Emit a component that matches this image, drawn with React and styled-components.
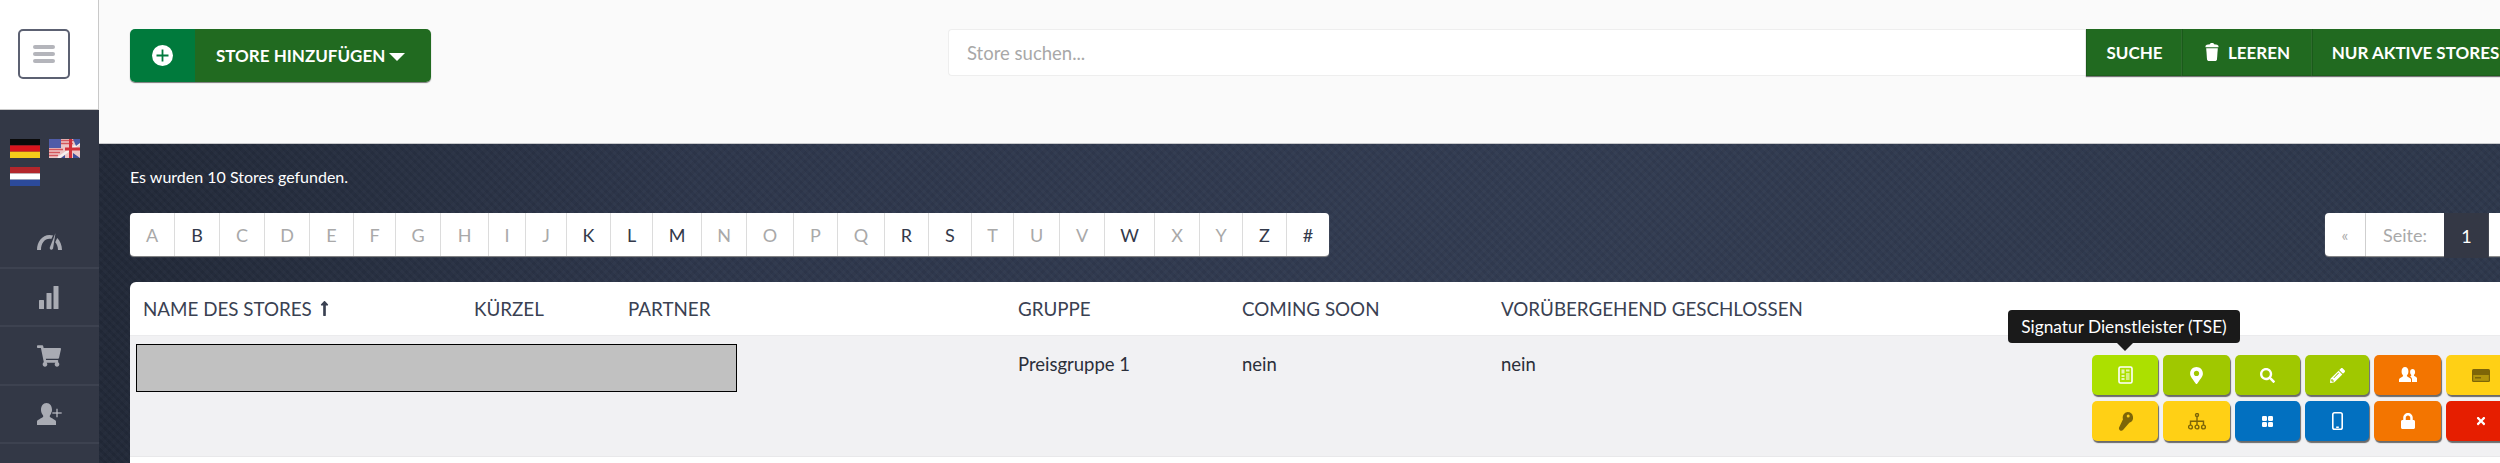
import React from "react";
import styled, { createGlobalStyle } from "styled-components";
import {
  FaShoppingCart,
  FaMapMarkerAlt,
  FaSearch,
  FaPencilAlt,
  FaLock,
  FaTimes,
  FaLongArrowAltUp,
} from "react-icons/fa";

const GlobalStyle = createGlobalStyle`
  html, body {
    margin: 0;
    padding: 0;
    background: #fafafa;
    font-family: "Lato", "Open Sans", sans-serif;
    overflow: hidden;
  }
`;

const LETTERS = [
  ["A", 45, 0], ["B", 45, 1], ["C", 45, 0], ["D", 45, 0], ["E", 44, 0], ["F", 42, 0],
  ["G", 45, 0], ["H", 48, 0], ["I", 37, 0], ["J", 41, 0], ["K", 44, 1], ["L", 42, 1],
  ["M", 49, 1], ["N", 45, 0], ["O", 47, 0], ["P", 44, 0], ["Q", 47, 0], ["R", 44, 1],
  ["S", 43, 1], ["T", 42, 0], ["U", 46, 0], ["V", 45, 0], ["W", 50, 1], ["X", 45, 0],
  ["Y", 43, 0], ["Z", 44, 1], ["#", 42, 1],
];

const COLUMNS = [
  ["NAME DES STORES", 331],
  ["KÜRZEL", 154],
  ["PARTNER", 390],
  ["GRUPPE", 224],
  ["COMING SOON", 259],
  ["VORÜBERGEHEND GESCHLOSSEN", 500],
];

const LIME = "#a0c800";
const ORANGE = "#f37500";
const YELLOW = "#ffd015";
const BLUE = "#0270c0";
const RED = "#e61e00";
const SIDE_ICON = "#a9abb3";
const DARK_ICON = "#7d6508";

function PlusCircle() {
  return (
    <svg width="21" height="21" viewBox="0 0 21 21">
      <circle cx="10.5" cy="10.5" r="10.5" fill="#fff" />
      <path d="M10.5 4.5v12M4.5 10.5h12" stroke="#007a3c" strokeWidth="1.8" />
    </svg>
  );
}

function TrashIcon() {
  return (
    <svg width="14" height="18" viewBox="0 0 14 18" fill="#fff">
      <path d="M5 1.2C5 .5 5.6 0 7 0s2 .5 2 1.2c2.5.2 4.5.8 4.5 1.8v1.2H.5V3c0-1 2-1.6 4.5-1.8z" />
      <path d="M1.2 5.200h11.600l-.8 11c-.1 1-.9 1.800-2 1.800H4c-1.100 0-1.900-.8-2-1.800z" />
    </svg>
  );
}

function TseIcon() {
  return (
    <svg width="15" height="18" viewBox="0 0 15 18">
      <rect x="1" y="1" width="13" height="16" rx="1.5" fill="none" stroke="#fff" strokeWidth="1.6" />
      <rect x="3.5" y="3.5" width="3" height="4" fill="#fff" opacity="0.7" />
      <rect x="8" y="3.5" width="3.5" height="2" fill="#fff" opacity="0.7" />
      <rect x="3.5" y="9" width="3" height="2" fill="#fff" opacity="0.7" />
      <rect x="8" y="7" width="3.5" height="7" fill="#fff" opacity="0.5" />
      <rect x="3.5" y="12" width="3" height="2" fill="#fff" opacity="0.7" />
    </svg>
  );
}

function TreeIcon() {
  return (
    <svg width="18" height="17" viewBox="0 0 18 17" fill="none" stroke={DARK_ICON} strokeWidth="1.4">
      <circle cx="9" cy="2" r="1.5" />
      <path d="M9 3.5V12M2.5 12V8.2h13V12" />
      <circle cx="2.5" cy="14" r="1.9" />
      <circle cx="9" cy="14" r="1.9" />
      <circle cx="15.5" cy="14" r="1.9" />
    </svg>
  );
}

function KeyIcon() {
  return (
    <svg width="15" height="19" viewBox="0 0 15 19" fill={DARK_ICON}>
      <path d="M9.5 0a5.500 5.500 0 0 1 1.800 10.700L5 18c-.7.8-1.900 1-2.900.4C1 17.700.6 16.400 1.200 15.300L5 7.200A5.500 5.500 0 0 1 9.500 0z" />
      <circle cx="10.2" cy="4" r="1.5" fill={YELLOW} />
    </svg>
  );
}

function GridIcon() {
  return (
    <svg width="11" height="11" viewBox="0 0 11 11" fill="#fff">
      <rect width="5" height="5" rx="1.2" />
      <rect x="6" width="5" height="5" rx="1.2" />
      <rect y="6" width="5" height="5" rx="1.2" />
      <rect x="6" y="6" width="5" height="5" rx="1.2" />
    </svg>
  );
}

function PhoneIcon() {
  return (
    <svg width="11" height="18" viewBox="0 0 11 18">
      <rect x="0.8" y="0.8" width="9.4" height="16.4" rx="1.8" fill="none" stroke="#fff" strokeWidth="1.6" />
      <rect x="4.2" y="14.5" width="2.6" height="1.5" fill="#fff" />
    </svg>
  );
}

function CardIcon() {
  return (
    <svg width="18" height="13" viewBox="0 0 18 13">
      <rect width="18" height="13" rx="1.5" fill={DARK_ICON} />
      <rect x="1.2" y="6" width="15.6" height="5.8" fill="#b2940c" />
      <rect x="3" y="8" width="6" height="1.5" fill={DARK_ICON} />
    </svg>
  );
}

function UsersIcon() {
  return (
    <svg width="18" height="16" viewBox="0 0 18 16" fill="#fff">
      <path d="M0 15v-2.500c0-1.400 3-2.200 4-3.200.3-.4 0-1-.4-1.500C2.800 6.700 2.600 5.500 2.600 4.200 2.600 1.800 3.900 0 6 0s3.400 1.800 3.400 4.200c0 1.300-.2 2.500-1 3.600-.4.500-.7 1.100-.4 1.500 1 1 4 1.800 4 3.200V15z" />
      <path d="M13 15v-2.800c0-1-.8-1.800-2-2.600.3-.3.8-.5 1.200-.9.200-.3 0-.7-.3-1.100-.6-.8-.8-1.700-.8-2.700 0-1.800 1-3 2.500-3S16.100 3.100 16.100 4.900c0 1-.2 1.900-.8 2.700-.3.400-.5.800-.3 1.100.7.700 3 1.300 3 2.400V15z" />
    </svg>
  );
}

function GaugeIcon() {
  return (
    <svg width="25" height="17" viewBox="0 0 25 17" fill={SIDE_ICON}>
      <path d="M0 17C0 9 5 2 12.500 2c1.300 0 2.500.2 3.600.6l-1.800 3.400c-.6-.1-1.200-.2-1.800-.2C7.500 5.800 4 10.500 4 17z" />
      <path d="M18.500 0 12.800 14.500c-.3 1.100.4 2 1.300 2.200 1 .2 1.800-.4 2-1.400z" />
      <path d="M20.200 5C23 7.800 25 12 25 17h-4c0-3.200-1-5.800-2.800-7.800z" />
    </svg>
  );
}

function BarsIcon() {
  return (
    <svg width="20" height="23" viewBox="0 0 20 23" fill={SIDE_ICON}>
      <rect x="0" y="14" width="5" height="9" rx="0.5" />
      <rect x="7.5" y="7" width="5" height="16" rx="0.5" />
      <rect x="14.5" y="0" width="5" height="23" rx="0.5" />
    </svg>
  );
}

function UserPlusIcon() {
  return (
    <svg width="25" height="22" viewBox="0 0 25 22" fill={SIDE_ICON}>
      <path d="M0 22v-3.500c0-1.800 4.500-3 6-4.500.5-.6.2-1.400-.4-2.200C4.400 10.200 4 8.500 4 6.800 4 3 6 0 9.500 0S15 3 15 6.800c0 1.700-.4 3.400-1.600 5-.6.8-.9 1.600-.4 2.200 1.500 1.500 6 2.700 6 4.500V22z" />
      <path d="M19 5.500h2V9h4v2h-4v3.500h-2V11h-4V9h4z" stroke="#333846" strokeWidth="0.6" />
    </svg>
  );
}

function FlagDe() {
  return (
    <svg width="30" height="19" viewBox="0 0 30 19">
      <rect width="30" height="6.4" fill="#0a0a0a" />
      <rect y="6.4" width="30" height="6.3" fill="#d8141c" />
      <rect y="12.7" width="30" height="6.3" fill="#f6cc1a" />
    </svg>
  );
}

function FlagNl() {
  return (
    <svg width="30" height="19" viewBox="0 0 30 19">
      <rect width="30" height="6.4" fill="#b3262c" />
      <rect y="6.4" width="30" height="6.3" fill="#fff" />
      <rect y="12.7" width="30" height="6.3" fill="#2c4a9a" />
    </svg>
  );
}

function FlagUk() {
  return (
    <svg width="31" height="19" viewBox="0 0 31 19">
      <rect width="31" height="19" fill="#ecc6c6" />
      <path d="M12 1.5h19M12 4.5h12M0 10.5h14M0 13.5h11M0 16.5h9" stroke="#d4575c" strokeWidth="1.3" />
      <rect width="12" height="9" fill="#505ca8" />
      <path d="M9 19 31 4" stroke="#f4f0f0" strokeWidth="2.5" />
      <path d="M24 0 31 0 31 4 27 7z" fill="#4a5aa4" />
      <path d="M20 0h3v8.500h8v3h-8V19h-3v-7.500h-4V8.500h4z" fill="#d2303a" />
      <path d="M24 19h7l-7-5zM12 19l4-3v3z" fill="#3f4f9a" />
    </svg>
  );
}

function App() {
  return (
    <Page>
      <GlobalStyle />
      <Sidebar>
        <LogoBar>
          <MenuToggle>
            <span />
            <span />
            <span />
          </MenuToggle>
        </LogoBar>
        <Flags>
          <FlagDe />
          <FlagUk />
          <FlagNl />
        </Flags>
        <MenuItem $h={51}><GaugeIcon /></MenuItem>
        <MenuItem $h={56}><BarsIcon /></MenuItem>
        <MenuItem $h={57}><FaShoppingCart size={24} color={SIDE_ICON} /></MenuItem>
        <MenuItem $h={56}><UserPlusIcon /></MenuItem>
        <MenuPeak />
      </Sidebar>
      <Main>
        <TopBar>
          <AddButton>
            <AddIcon><PlusCircle /></AddIcon>
            <AddLabel>STORE HINZUFÜGEN<Caret /></AddLabel>
          </AddButton>
          <SearchGroup>
            <SearchInput placeholder="Store suchen..." />
            <SearchButton $w={96}>SUCHE</SearchButton>
            <SearchButton $w={130}><TrashIcon />LEEREN</SearchButton>
            <SearchButton $w={206}>NUR AKTIVE STORES</SearchButton>
          </SearchGroup>
        </TopBar>
        <Content>
          <Found>Es wurden 10 Stores gefunden.</Found>
          <FilterRow>
            <AlphaBar>
              {LETTERS.map(([letter, width, active]) => (
                <Letter key={letter} $w={width} $active={active}>{letter}</Letter>
              ))}
            </AlphaBar>
            <Pager>
              <PagerCell $w={41}><small>«</small></PagerCell>
              <PagerCell $w={78} $plain>Seite:</PagerCell>
              <PagerCurrent>1</PagerCurrent>
              <PagerCell $w={20} $plain />
            </Pager>
          </FilterRow>
          <Card>
            <HeadRow>
              {COLUMNS.map(([label, width], i) => (
                <HeadCell key={label} $w={width}>
                  {label}
                  {i === 0 && <FaLongArrowAltUp size={17} />}
                </HeadCell>
              ))}
            </HeadRow>
            <BodyRow>
              <Redacted />
              <BodyCell $w={224}>Preisgruppe 1</BodyCell>
              <BodyCell $w={259}>nein</BodyCell>
              <BodyCell $w={591}>nein</BodyCell>
              <Actions>
                <Tooltip>Signatur Dienstleister (TSE)</Tooltip>
                <ActionRow>
                  <Action $w={66} $bg="#ace000"><TseIcon /></Action>
                  <Action $w={67} $bg={LIME}><FaMapMarkerAlt size={17} /></Action>
                  <Action $w={65} $bg={LIME}><FaSearch size={15} /></Action>
                  <Action $w={64} $bg={LIME}><FaPencilAlt size={15} /></Action>
                  <Action $w={67} $bg={ORANGE}><UsersIcon /></Action>
                  <Action $w={70} $bg={YELLOW}><CardIcon /></Action>
                </ActionRow>
                <ActionRow>
                  <Action $w={66} $bg={YELLOW}><KeyIcon /></Action>
                  <Action $w={67} $bg={YELLOW}><TreeIcon /></Action>
                  <Action $w={65} $bg={BLUE}><GridIcon /></Action>
                  <Action $w={64} $bg={BLUE}><PhoneIcon /></Action>
                  <Action $w={67} $bg={ORANGE}><FaLock size={16} /></Action>
                  <Action $w={70} $bg={RED}><FaTimes size={12} /></Action>
                </ActionRow>
              </Actions>
            </BodyRow>
          </Card>
        </Content>
      </Main>
    </Page>
  );
}

export default App;

const Page = styled.div`
  display: flex;
  width: 2500px;
  height: 463px;
  overflow: hidden;
`;

const Sidebar = styled.aside`
  width: 99px;
  flex: none;
  background: #333846;
`;

const LogoBar = styled.div`
  height: 110px;
  box-sizing: border-box;
  padding: 29px 0 0 18px;
  background: #fff;
  border-right: 1px solid #c9c9c9;
  border-bottom: 1px solid #c9c9c9;
`;

const MenuToggle = styled.div`
  width: 52px;
  height: 50px;
  box-sizing: border-box;
  display: flex;
  flex-direction: column;
  justify-content: center;
  align-items: center;
  gap: 3px;
  border: 2px solid #5c6172;
  border-radius: 5px;

  span {
    width: 22px;
    height: 4px;
    border-radius: 2px;
    background: #b4b5bb;
  }
`;

const Flags = styled.div`
  height: 106px;
  box-sizing: border-box;
  padding: 29px 0 0 10px;
  display: flex;
  flex-wrap: wrap;
  align-content: flex-start;
  column-gap: 9px;
  row-gap: 9px;
  width: 90px;

  svg {
    display: block;
  }
`;

const MenuItem = styled.div`
  height: ${(props) => props.$h}px;
  display: flex;
  align-items: center;
  justify-content: center;
  border-bottom: 2px solid #3d4250;
  padding-right: 1px;
`;

const MenuPeak = styled.div`
  width: 0;
  height: 0;
  margin: 21px 0 0 40px;
  border-left: 5px solid transparent;
  border-right: 5px solid transparent;
  border-bottom: 9px solid #a9abb3;
`;

const Main = styled.main`
  flex: 1;
  min-width: 0;
  overflow: hidden;
`;

const TopBar = styled.header`
  height: 144px;
  box-sizing: border-box;
  padding: 29px 0 0 31px;
  display: flex;
  align-items: flex-start;
  background: #fafafa;
  border-bottom: 1px solid #c8c9cc;
`;

const AddButton = styled.div`
  width: 301px;
  height: 53px;
  flex: none;
  display: flex;
  border-radius: 5px;
  overflow: hidden;
  color: #fff;
  box-shadow: 0 1px 1px #777;
`;

const AddIcon = styled.div`
  width: 65px;
  display: flex;
  align-items: center;
  justify-content: center;
  background: #007a3c;
`;

const AddLabel = styled.div`
  flex: 1;
  display: flex;
  align-items: center;
  padding-left: 21px;
  background: #216a20;
  font-size: 17px;
  font-weight: 700;
  white-space: nowrap;
`;

const Caret = styled.i`
  width: 0;
  height: 0;
  margin: 3px 0 0 4px;
  border-left: 8px solid transparent;
  border-right: 8px solid transparent;
  border-top: 8px solid #fff;
`;

const SearchGroup = styled.div`
  display: flex;
  flex: none;
  margin-left: 517px;
`;

const SearchInput = styled.input`
  width: 1138px;
  height: 47px;
  box-sizing: border-box;
  padding: 0 18px;
  border: 1px solid #eee;
  border-right: 0;
  border-radius: 4px 0 0 4px;
  background: #fff;
  font-family: inherit;
  font-size: 18.5px;

  &::placeholder {
    color: #a8a8a8;
  }
`;

const SearchButton = styled.div`
  width: ${(props) => props.$w}px;
  height: 47px;
  flex: none;
  box-sizing: border-box;
  display: flex;
  align-items: center;
  justify-content: center;
  gap: 9px;
  background: #216a20;
  border-left: 1px solid #1b5a1b;
  border-bottom: 1px solid #1d5d1c;
  box-shadow: 0 1px 1px #777;
  color: #fff;
  font-size: 17px;
  font-weight: 700;
  white-space: nowrap;
`;

const Content = styled.section`
  height: 319px;
  padding: 0 0 0 31px;
  background-color: #2c3548;
  background-image:
    repeating-linear-gradient(45deg, rgba(255, 255, 255, 0.018) 0 3px, transparent 3px 6px),
    repeating-linear-gradient(-45deg, rgba(0, 0, 0, 0.05) 0 3px, transparent 3px 6px),
    linear-gradient(90deg, #222938 0, #2e374c 25%, #323c52 60%, #2e384c 100%);
`;

const Found = styled.p`
  margin: 0;
  padding-top: 24px;
  height: 45px;
  color: #fff;
  font-size: 16px;
  line-height: 18px;
`;

const FilterRow = styled.div`
  display: flex;
  align-items: flex-start;
  height: 69px;
`;

const AlphaBar = styled.div`
  display: flex;
  height: 43px;
  flex: none;
  background: #fff;
  border-radius: 4px;
  box-shadow: 0 1px 1px #8c8c8c;
  overflow: hidden;
`;

const Letter = styled.div`
  width: ${(props) => props.$w}px;
  box-sizing: border-box;
  display: flex;
  align-items: center;
  justify-content: center;
  border-right: 1px solid #dcdcdc;
  font-size: 18px;
  color: ${(props) => (props.$active ? "#33394a" : "#a9a9a9")};

  &:last-child {
    border-right: 0;
  }
`;

const Pager = styled.div`
  display: flex;
  height: 43px;
  margin-left: 996px;
  flex: none;
`;

const PagerCell = styled.div`
  width: ${(props) => props.$w}px;
  box-sizing: border-box;
  display: flex;
  align-items: center;
  justify-content: center;
  background: #fff;
  border-right: ${(props) => (props.$plain ? "0" : "1px solid #dcdcdc")};
  border-radius: ${(props) => (props.$plain ? "0" : "4px 0 0 4px")};
  box-shadow: 0 1px 1px #8c8c8c;
  color: #a9a9a9;
  font-size: 18px;

  small {
    font-size: 16px;
  }
`;

const PagerCurrent = styled.div`
  width: 45px;
  height: 45px;
  display: flex;
  align-items: center;
  justify-content: center;
  background: #343845;
  color: #fff;
  font-size: 18px;
`;

const Card = styled.div`
  width: 2380px;
  height: 182px;
  background: #fff;
  border-radius: 6px 0 0 0;
`;

const HeadRow = styled.div`
  display: flex;
  align-items: center;
  height: 53px;
  padding-left: 13px;
`;

const HeadCell = styled.div`
  width: ${(props) => props.$w}px;
  flex: none;
  display: flex;
  align-items: center;
  gap: 4px;
  color: #3a4152;
  font-size: 18.8px;
  white-space: nowrap;
`;

const BodyRow = styled.div`
  display: flex;
  align-items: flex-start;
  height: 122px;
  padding: 8px 0 0 6px;
  box-sizing: border-box;
  background: #f1f1f3;
  border-top: 1px solid #ebebed;
  border-bottom: 1px solid #e8e8ea;
`;

const Redacted = styled.div`
  width: 601px;
  height: 48px;
  flex: none;
  margin-right: 281px;
  box-sizing: border-box;
  background: #c1c1c1;
  border: 1px solid #000;
`;

const BodyCell = styled.div`
  width: ${(props) => props.$w}px;
  flex: none;
  padding-top: 8px;
  color: #2b2f3a;
  font-size: 18.5px;
  line-height: 24px;
`;

const Actions = styled.div`
  position: relative;
  flex: none;
  display: flex;
  flex-direction: column;
  gap: 6px;
  margin-top: 11px;
`;

const ActionRow = styled.div`
  display: flex;
  gap: 5px;
`;

const Action = styled.div`
  width: ${(props) => props.$w}px;
  height: 40px;
  flex: none;
  display: flex;
  align-items: center;
  justify-content: center;
  border-radius: 5px;
  background: ${(props) => props.$bg};
  color: #fff;
  box-shadow: 1px 2px 1px #6a6a6a;
`;

const Tooltip = styled.div`
  position: absolute;
  left: -84px;
  top: -45px;
  width: 232px;
  height: 33px;
  display: flex;
  align-items: center;
  justify-content: center;
  border-radius: 4px;
  background: #1a1a1a;
  color: #fff;
  font-size: 17.3px;
  white-space: nowrap;

  &::after {
    content: "";
    position: absolute;
    left: 109px;
    top: 33px;
    border-left: 8px solid transparent;
    border-right: 8px solid transparent;
    border-top: 8px solid #1a1a1a;
  }
`;
